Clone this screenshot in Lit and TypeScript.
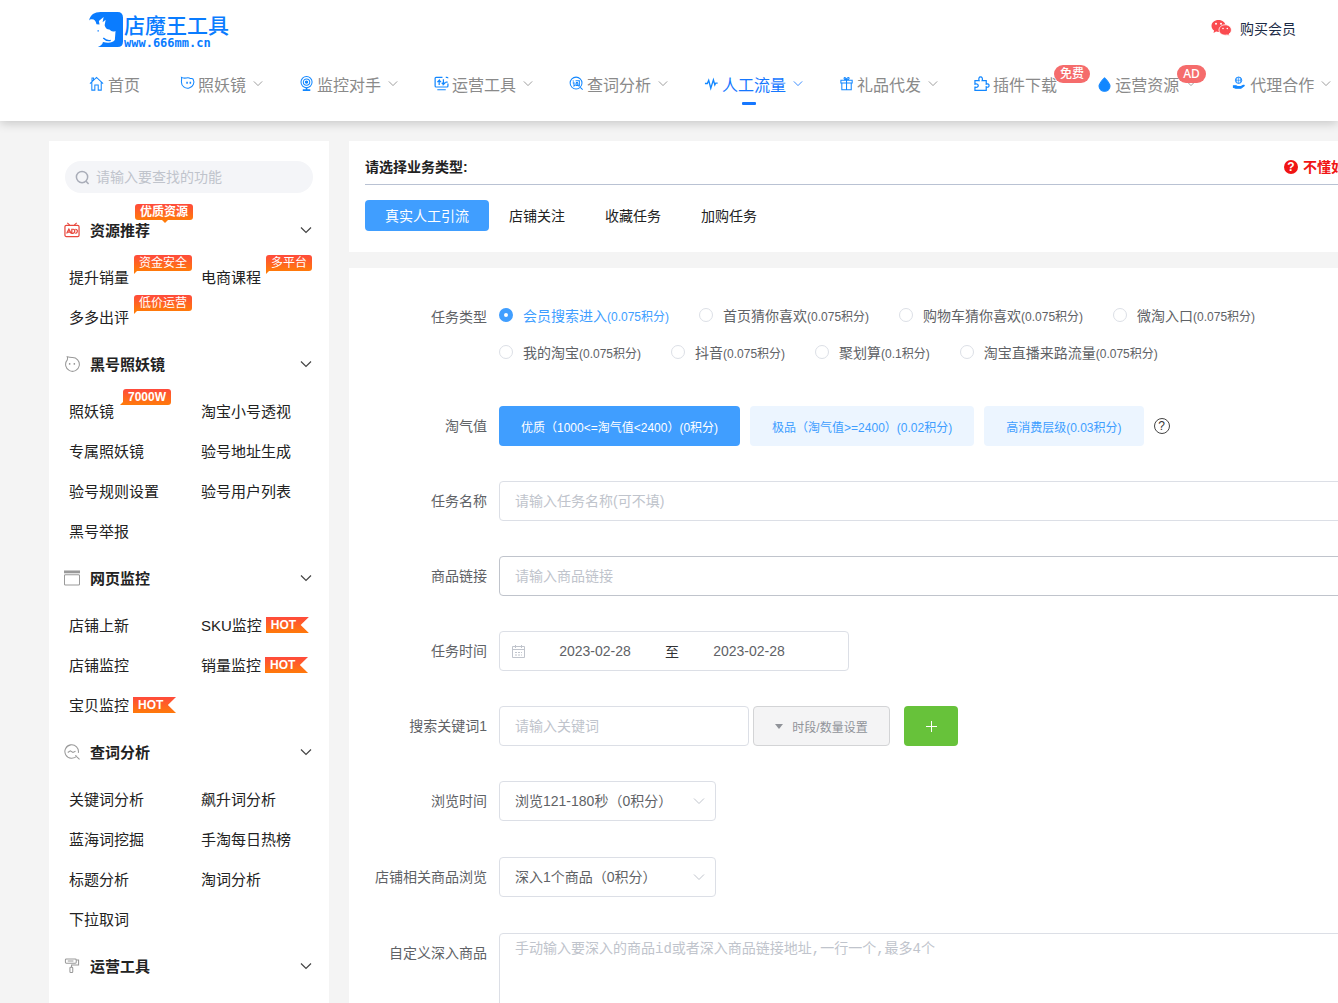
import { LitElement, html, css, svg, nothing } from "lit";
import { customElement, state } from "lit/decorators.js";
import { classMap } from "lit/directives/class-map.js";

const icons: Record<string, unknown> = {
  home: svg`<path d="M1 8 8 1.500 15 8M3 6.500V15h3.200V9.500h3.600V15H13V6.500M3.200 5.600V2.200h1.600V4"/>`,
  mirror: svg`<path d="M1.600 1.500c.4 2-.1 2.800-.1 4.900a6.600 6.600 0 1 0 12.400-3.100C12.800 1.900 11.800 3.300 10 2.200 7.400 1.100 5 3.500 1.600 1.500Z"/><path d="M7.500 6.200v2M11 6.200v2" stroke-width="1.600"/>`,
  cam: svg`<circle cx="8" cy="6.500" r="5.900"/><circle cx="8" cy="6.500" r="3.400"/><circle cx="8" cy="6.500" r="1.200" fill="currentColor"/><path d="M8 12.500v1.500M4 15h8" stroke-width="1.700"/>`,
  screen: svg`<path d="M9 1.500H2.200Q1.200 1.500 1.200 2.500v8.200q0 1 1 1h11.600q1 0 1-1V8M12.500 1.500h1.300q1 0 1 1M3.500 14.600h9M5.500 9.500V4.500L3.600 6.500M5.500 4.500l2 2M10 3.500v5.500l2.300-2.300M10 9 8.200 7.200M12.500 6.500h2" stroke-width="1.300"/>`,
  word: svg`<circle cx="7.500" cy="7.500" r="6.300"/><path d="M12 12l2.500 2.500M4 5l1 .8M4 7.300h1.300v3.200l1-.7M7 5h4v5.500H9.800M7.300 6.800h2.200M7.400 8.300h2v1.700h-2z"/>`,
  pulse: svg`<path d="M1 8H3.500l1.500-3.500 2.200 8.500L10 4 11.500 9.500 12.500 7.500H14.500" stroke-width="1.400"/>`,
  gift: svg`<path d="M2 4.500h12v3H2zM3 7.500V14.500h10V7.500M8 4.500v10M8 4.400C5.500 4.400 4.600 1.600 6.200 1.500 7.500 1.500 8 4.400 8 4.400s.5-2.900 2-2.900c1.500.1.700 2.900-2 2.900"/>`,
  puzzle: svg`<path d="M1 5h4.500C4.500 2.500 5.500 1 7 1s2.600 1.500 1.600 4H13v3.700c2-.8 3 .1 3 1.400 0 1.400-1 2.400-3 1.500V15.300H1v-3.400c2.500.6 3.500-.5 3.500-1.700S3.300 8 1 8.700Z" stroke-width="1.300"/>`,
  drop: svg`<path d="M8 2S2.200 7.600 2.200 11C2.200 14 4.700 16.300 8 16.300S13.800 14 13.800 11C13.800 7.600 8 2 8 2Z" fill="currentColor"/>`,
  agent: svg`<circle cx="7" cy="4.500" r="3.400" stroke-width="1"/><path d="M3.800 4.500h6.400M7 1v7M5.300 1.800q-1 2.700 0 5.400M8.700 1.800q1 2.700 0 5.400" stroke-width=".7"/><path d="M1.500 10.300h2.800l2 1H9l3-1.500q1-.2 1 .5L9.500 13H4L1.500 12.200Z" fill="currentColor"/>`,
  ad: svg`<rect x="1" y="3.500" width="15" height="12" rx="1.500" stroke-width="1.300"/><path d="M3.500 1 6 3.200M13.500 1 11 3.200"/><path d="M2.800 12.300 5.200 7.500l2.400 4.800M4 10.800h2.800M8.300 7.700h1.500q1.900.2 1.600 2.200-.2 2-1.900 2.200H8.300ZM12 7.700q2.300.1 2.200 2.200t-2.200 2.200" stroke-width="1.300"/>`,
  face: svg`<path d="M3.500.8q.5 1.500 0 3.400A7.300 7.300 0 1 0 8.500 1.700Q6 1.600 3.500.8Z"/><path d="M6 7.500v1.700M11 7.500v1.700" stroke-width="1.500"/>`,
  page: svg`<path d="M0 .5h17v3H0z" fill="currentColor" stroke="none"/><rect x=".5" y="5" width="16" height="11" rx="1"/>`,
  trend: svg`<path d="M13.800 12.500A7.200 7.200 0 1 1 15.200 9.500M12 12l4.500 4.300M4 9l2.700-1.800L9.500 9l2.700-1.200"/>`,
  roller: svg`<rect x="1.500" y="1" width="11.500" height="4.500" rx="1"/><path d="M4 3.200h6M13 2.200h2.500V7.500H8v2.300"/><rect x="6.300" y="9.800" width="3" height="5.700" rx=".8"/>`,
};

const icon = (name: string) =>
  html`<svg class="icon" viewBox="0 0 17 17" aria-hidden="true">${icons[name]}</svg>`;

const chevron = (cls: string) =>
  html`<svg class=${cls} viewBox="0 0 12 8" aria-hidden="true"><path d="M1 1.500 6 6.500 11 1.500" /></svg>`;

const font = css`
  :host {
    box-sizing: border-box;
    font-family: "Liberation Sans", "Noto Sans CJK SC", sans-serif;
  }
  * {
    box-sizing: border-box;
  }
  a {
    color: inherit;
    text-decoration: none;
  }
  button,
  input,
  select {
    font-family: inherit;
    margin: 0;
  }
  .icon {
    width: 16px;
    height: 16px;
    fill: none;
    stroke: currentColor;
    stroke-width: 1.1;
    flex: none;
  }
`;

interface NavItem {
  label: string;
  icon: string;
  arrow?: boolean;
  badge?: string;
  wide?: boolean;
}

const nav: NavItem[] = [
  { label: "首页", icon: "home", wide: true },
  { label: "照妖镜", icon: "mirror", arrow: true },
  { label: "监控对手", icon: "cam", arrow: true },
  { label: "运营工具", icon: "screen", arrow: true },
  { label: "查词分析", icon: "word", arrow: true },
  { label: "人工流量", icon: "pulse", arrow: true },
  { label: "礼品代发", icon: "gift", arrow: true },
  { label: "插件下载", icon: "puzzle", badge: "免费", wide: true },
  { label: "运营资源", icon: "drop", arrow: true, badge: "AD" },
  { label: "代理合作", icon: "agent", arrow: true },
];

@customElement("site-header")
class SiteHeader extends LitElement {
  @state() private current = "人工流量";

  static styles = [
    font,
    css`
      :host {
        display: block;
        position: relative;
        z-index: 2;
        background: #fff;
        box-shadow: 0 2px 10px rgba(0, 0, 0, 0.2);
      }
      .top {
        display: flex;
        justify-content: space-between;
        align-items: center;
        height: 50px;
        padding: 8px 42px 0 89px;
      }
      .logo {
        display: flex;
        gap: 1px;
        color: #0a7cff;
      }
      .mark {
        width: 34px;
        height: 35px;
      }
      .brand {
        display: flex;
        flex-direction: column;
        font-size: 21px;
        font-weight: 500;
        line-height: 27px;
      }
      .domain {
        font: bold 12px/8px "DejaVu Sans Mono", monospace;
      }
      .buy {
        display: flex;
        align-items: center;
        gap: 8px;
        padding-bottom: 2px;
        font-size: 14px;
        color: #1b2a45;
      }
      .wechat {
        width: 21px;
        height: 18px;
      }
      nav {
        display: flex;
        height: 71px;
        padding: 0 0 4px 69px;
      }
      .item {
        position: relative;
        display: flex;
        align-items: center;
        flex: none;
        gap: 2px;
        padding: 0 20px;
        font-size: 16px;
        color: #8a8a8a;
      }
      .wide {
        gap: 3px;
      }
      .item .icon {
        color: #1287ff;
      }
      .on {
        color: #1677ff;
      }
      .on::after {
        content: "";
        position: absolute;
        left: calc(50% - 10px);
        top: 52px;
        width: 14px;
        height: 3px;
        border-radius: 1px;
        background: #1677ff;
      }
      .arrow {
        width: 10px;
        height: 7px;
        margin: 0 -4px 0 5px;
        fill: none;
        stroke: currentColor;
      }
      .badge {
        position: absolute;
        left: 100px;
        top: 15px;
        height: 18px;
        padding: 0 6px;
        border-radius: 9px;
        background: #f56c6c;
        color: #fff;
        font: 500 12px/18px "Noto Sans", "Noto Sans CJK SC", sans-serif;
        white-space: nowrap;
      }
    `,
  ];

  render() {
    return html`
      <div class="top">
        <a class="logo" href="#">
          <svg class="mark" viewBox="0 0 100 100" preserveAspectRatio="none" aria-hidden="true">
            <path
              fill="currentColor"
              d="M0 24C4 8 16 0 34 0H84Q100 0 100 16V84Q100 100 84 100H26Q40 95 41 86 66 92 76 80L78 54Q68 59 60 50 49 50 46 38L49 22 40 29 43 14 29 26 31 36 22 35Q19 21 9 21 3 20 0 24Z"
            />
            <path fill="none" stroke="currentColor" stroke-width="4" d="M42 74Q52 84 64 81M27 52v4" />
          </svg>
          <span class="brand">店魔王工具<span class="domain">www.666mm.cn</span></span>
        </a>
        <a class="buy" href="#">
          <svg class="wechat" viewBox="0 0 21 18" aria-hidden="true">
            <path fill="#fa4b50" d="M7.500 1C3.600 1 .5 3.500.5 6.900c0 1.900 1 3.500 2.600 4.600L2.500 14l2.600-1.400c.8.2 1.500.3 2.400.3 4 0 7-2.600 7-6S11.500 1 7.500 1Z" />
            <path fill="#fa4b50" stroke="#fff" stroke-width=".8" d="M14.200 5.800c-3.500 0-6.200 2.300-6.200 5.200s2.700 5.200 6.200 5.200c.7 0 1.400-.1 2-.3l2.200 1.200-.5-2c1.500-1 2.500-2.400 2.500-4.100 0-2.900-2.700-5.200-6.200-5.200Z" />
            <g fill="#fff"><circle cx="5" cy="4.800" r="1" /><circle cx="10" cy="4.800" r="1" /><circle cx="12" cy="9.500" r=".8" /><circle cx="16.300" cy="9.500" r=".8" /></g>
          </svg>
          购买会员
        </a>
      </div>
      <nav>
        ${nav.map(
          (n) => html`<a
            href="#"
            class=${classMap({ item: true, wide: !!n.wide, on: n.label === this.current })}
            @click=${() => (this.current = n.label)}
            >${icon(n.icon)}<span>${n.label}</span>${n.arrow ? chevron("arrow") : nothing}${n.badge
              ? html`<span class="badge">${n.badge}</span>`
              : nothing}</a
          >`
        )}
      </nav>
    `;
  }
}

interface MenuEntry {
  label: string;
  tag?: string;
  hot?: boolean;
}
interface MenuGroup {
  title: string;
  icon: string;
  red?: boolean;
  tag?: string;
  items: MenuEntry[];
}

const groups: MenuGroup[] = [
  {
    title: "资源推荐",
    icon: "ad",
    red: true,
    tag: "优质资源",
    items: [
      { label: "提升销量", tag: "资金安全" },
      { label: "电商课程", tag: "多平台" },
      { label: "多多出评", tag: "低价运营" },
    ],
  },
  {
    title: "黑号照妖镜",
    icon: "face",
    items: [
      { label: "照妖镜", tag: "7000W" },
      { label: "淘宝小号透视" },
      { label: "专属照妖镜" },
      { label: "验号地址生成" },
      { label: "验号规则设置" },
      { label: "验号用户列表" },
      { label: "黑号举报" },
    ],
  },
  {
    title: "网页监控",
    icon: "page",
    items: [
      { label: "店铺上新" },
      { label: "SKU监控", hot: true },
      { label: "店铺监控" },
      { label: "销量监控", hot: true },
      { label: "宝贝监控", hot: true },
    ],
  },
  {
    title: "查词分析",
    icon: "trend",
    items: [
      { label: "关键词分析" },
      { label: "飙升词分析" },
      { label: "蓝海词挖掘" },
      { label: "手淘每日热榜" },
      { label: "标题分析" },
      { label: "淘词分析" },
      { label: "下拉取词" },
    ],
  },
  { title: "运营工具", icon: "roller", items: [] },
];

@customElement("side-menu")
class SideMenu extends LitElement {
  @state() private closed = new Set<string>();

  static styles = [
    font,
    css`
      :host {
        display: block;
        flex: none;
        width: 280px;
        padding: 20px 16px 10px;
        background: #fff;
        font-size: 15px;
        color: #222;
      }
      .search {
        display: flex;
        align-items: center;
        gap: 4px;
        height: 32px;
        margin-bottom: 10px;
        padding: 0 10px;
        border-radius: 16px;
        background: #f4f5f8;
        color: #a9adb8;
      }
      .lens {
        width: 15px;
        height: 15px;
        fill: none;
        stroke: currentColor;
        stroke-width: 1.6;
      }
      .query {
        flex: 1;
        min-width: 0;
        border: 0;
        outline: 0;
        background: none;
        font-size: 14px;
      }
      .query::placeholder {
        color: #c0c4cc;
      }
      .head {
        display: flex;
        align-items: center;
        width: 100%;
        height: 54px;
        padding: 0;
        border: 0;
        background: none;
        font-size: 15px;
        font-weight: bold;
        color: #222;
        text-align: left;
      }
      .sign {
        display: flex;
        margin: 0 10px 0 -1px;
        color: #999;
      }
      .red {
        color: #e8473c;
      }
      .title {
        position: relative;
        flex: none;
        padding-bottom: 2px;
      }
      .arrow {
        width: 12px;
        height: 8px;
        margin-left: auto;
        margin-right: 1px;
        fill: none;
        stroke: #444;
        stroke-width: 1.2;
      }
      .list {
        display: grid;
        grid-template-columns: 132px 1fr;
        padding-left: 4px;
      }
      .entry {
        display: flex;
        align-items: center;
        gap: 4px;
        height: 40px;
        white-space: nowrap;
      }
      .name {
        position: relative;
        padding-bottom: 2px;
      }
      .tag {
        position: absolute;
        left: calc(100% + 5px);
        top: -11px;
        height: 16px;
        padding: 0 5px;
        border-radius: 3px 3px 3px 0;
        background: linear-gradient(#ff4a3c, #ff7a0a);
        color: #fff;
        font-size: 12px;
        line-height: 16px;
        white-space: nowrap;
      }
      .tag::after {
        content: "";
        position: absolute;
        left: 0;
        top: 15px;
        border-style: solid;
        border-width: 4px 4px 0 0;
        border-color: #ff7a0a transparent transparent;
      }
      .title .tag {
        left: 45px;
        top: -15px;
        border-radius: 3px;
      }
      .title .tag::after {
        left: 26px;
        border-width: 4px 4px 0;
      }
      .tag.strong {
        left: calc(100% + 9px);
        font-weight: bold;
      }
      .tag.strong::after {
        left: -3px;
        border-width: 0 0 4px 4px;
        border-color: transparent transparent #ff7a0a;
        top: 12px;
      }
      .hot {
        width: 43px;
        height: 16px;
        padding-left: 5px;
        background: linear-gradient(#ff4a3c, #ff7a0a);
        clip-path: polygon(0 0, 100% 0, 81% 50%, 100% 100%, 0 100%);
        color: #fff;
        font-size: 12px;
        font-weight: bold;
        line-height: 16px;
      }
    `,
  ];

  private toggle(t: string) {
    const next = new Set(this.closed);
    if (!next.delete(t)) next.add(t);
    this.closed = next;
  }

  render() {
    return html`
      <label class="search">
        <svg class="lens" viewBox="0 0 16 16" aria-hidden="true"><circle cx="7.500" cy="7.500" r="6" /><path d="M11.800 12l2.700 3" /></svg>
        <input class="query" type="text" placeholder="请输入要查找的功能" />
      </label>
      ${groups.map(
        (g) => html`
          <button class="head" type="button" @click=${() => this.toggle(g.title)}>
            <span class=${classMap({ sign: true, red: !!g.red })}>${icon(g.icon)}</span>
            <span class="title">${g.title}${g.tag ? html`<span class="tag">${g.tag}</span>` : nothing}</span>
            ${chevron("arrow")}
          </button>
          ${this.closed.has(g.title)
            ? nothing
            : html`<div class="list">
                ${g.items.map(
                  (i) => html`<a class="entry" href="#"
                    ><span class="name"
                      >${i.label}${i.tag
                        ? html`<span class=${classMap({ tag: true, strong: i.tag === "7000W" })}>${i.tag}</span>`
                        : nothing}</span
                    >${i.hot ? html`<span class="hot">HOT</span>` : nothing}</a
                  >`
                )}
              </div>`}
        `
      )}
    `;
  }
}

const kinds: [string, string][] = [
  ["会员搜索进入", "(0.075积分)"],
  ["首页猜你喜欢", "(0.075积分)"],
  ["购物车猜你喜欢", "(0.075积分)"],
  ["微淘入口", "(0.075积分)"],
  ["我的淘宝", "(0.075积分)"],
  ["抖音", "(0.075积分)"],
  ["聚划算", "(0.1积分)"],
  ["淘宝直播来路流量", "(0.075积分)"],
];
const levels = ["优质（1000<=淘气值<2400）(0积分)", "极品（淘气值>=2400）(0.02积分)", "高消费层级(0.03积分)"];
const tabs = ["真实人工引流", "店铺关注", "收藏任务", "加购任务"];

@customElement("task-form")
class TaskForm extends LitElement {
  @state() private tab = 0;
  @state() private kind = 0;
  @state() private level = 0;

  static styles = [
    font,
    css`
      :host {
        display: flex;
        flex-direction: column;
        flex: 1 0 1012px;
        gap: 16px;
        font-size: 14px;
        color: #606266;
      }
      .panel {
        padding: 16px 16px 21px;
        background: #fff;
      }
      .bar {
        display: flex;
        justify-content: space-between;
        padding-bottom: 7px;
        border-bottom: 1px solid #b9c2d3;
        line-height: 20px;
        font-weight: bold;
        color: #222;
      }
      h2 {
        margin: 0;
        font-size: 14px;
      }
      .help {
        display: flex;
        align-items: center;
        gap: 5px;
        color: #f01414;
      }
      .dot {
        display: grid;
        place-items: center;
        width: 14px;
        height: 14px;
        border-radius: 50%;
        background: #f01414;
        color: #fff;
        font-size: 12px;
        line-height: 14px;
      }
      .tabs {
        display: flex;
        margin-top: 15px;
      }
      .tab {
        height: 31px;
        padding: 0 20px 2px;
        border: 0;
        border-radius: 4px;
        background: none;
        font-size: 14px;
        color: #222;
      }
      .tab.on {
        background: #409eff;
        color: #fff;
      }
      .form {
        flex: 1;
        display: flex;
        flex-direction: column;
        gap: 35px;
        padding: 29px 16px 30px;
        background: #fff;
      }
      .row {
        display: flex;
        min-height: 40px;
      }
      .tall {
        min-height: 41px;
      }
      .label {
        flex: none;
        width: 134px;
        padding-right: 12px;
        line-height: 40px;
        text-align: right;
      }
      .field {
        flex: 1;
        display: flex;
        align-items: flex-start;
      }
      .radios {
        flex-wrap: wrap;
        column-gap: 30px;
      }
      .radio {
        display: flex;
        align-items: center;
        gap: 10px;
        height: 37px;
        padding-bottom: 2px;
      }
      .radio input {
        appearance: none;
        width: 14px;
        height: 14px;
        border: 1px solid #dcdfe6;
        border-radius: 50%;
        background: #fff;
      }
      .radio input:checked {
        border: 5px solid #409eff;
      }
      .radio.on {
        color: #409eff;
      }
      small {
        font-size: 12px;
      }
      .levels {
        align-items: center;
        gap: 10px;
      }
      .level {
        height: 40px;
        padding: 0 22px;
        border: 0;
        border-radius: 4px;
        background: #ecf5ff;
        font-size: 12px;
        color: #409eff;
      }
      .level.on {
        background: #409eff;
        color: #fff;
      }
      .ask {
        width: 16px;
        height: 16px;
        padding: 0;
        border: 1px solid #444;
        border-radius: 50%;
        background: none;
        font-size: 12px;
        line-height: 14px;
        color: #333;
      }
      .box {
        width: 100%;
        height: 40px;
        padding: 0 15px;
        border: 1px solid #dcdfe6;
        border-radius: 4px;
        outline: 0;
        background: #fff;
        font-size: 14px;
        color: #606266;
      }
      .box.dark {
        border-color: #c0c4cc;
      }
      ::placeholder {
        color: #c0c4cc;
      }
      .range {
        display: flex;
        align-items: center;
        width: 350px;
        padding: 0 12px;
        color: #303133;
      }
      .cal {
        width: 13px;
        height: 13px;
        fill: none;
        stroke: #c0c4cc;
      }
      .date {
        width: 140px;
        border: 0;
        outline: 0;
        background: none;
        font-size: 14px;
        color: #606266;
        text-align: center;
      }
      .key {
        width: 250px;
      }
      .setup {
        display: flex;
        align-items: center;
        justify-content: center;
        gap: 9px;
        width: 137px;
        height: 40px;
        margin: 0 14px 0 4px;
        border: 1px solid #d3d4d6;
        border-radius: 4px;
        background: #f4f4f5;
        font-size: 12px;
        color: #909399;
      }
      .caret {
        border: solid transparent;
        border-width: 5px 4px 0;
        border-top-color: #909399;
      }
      .add {
        display: grid;
        place-items: center;
        width: 54px;
        height: 40px;
        border: 0;
        border-radius: 4px;
        background: #67c23a;
      }
      .plus {
        width: 11px;
        height: 11px;
        stroke: #fff;
      }
      .pick {
        display: grid;
        align-items: center;
        width: 217px;
      }
      .pick > * {
        grid-area: 1 / 1;
      }
      select.box {
        appearance: none;
      }
      .arrow {
        width: 12px;
        height: 8px;
        margin-right: 11px;
        justify-self: end;
        fill: none;
        stroke: #c0c4cc;
        pointer-events: none;
      }
      textarea.box {
        height: 96px;
        padding: 5px 15px;
        font: 14px/21px "Liberation Mono", "Noto Sans CJK SC", monospace;
      }
    `,
  ];

  render() {
    return html`
      <section class="panel">
        <div class="bar">
          <h2>请选择业务类型:</h2>
          <a class="help" href="#"><span class="dot">?</span>不懂如</a>
        </div>
        <div class="tabs">
          ${tabs.map(
            (t, i) => html`<button
              type="button"
              class=${classMap({ tab: true, on: i === this.tab })}
              @click=${() => (this.tab = i)}
            >${t}</button>`
          )}
        </div>
      </section>
      <form class="form">
        <div class="row">
          <span class="label" id="kind">任务类型</span>
          <div class="field radios" role="radiogroup" aria-labelledby="kind">
            ${kinds.map(
              ([name, price], i) => html`<label class=${classMap({ radio: true, on: i === this.kind })}
                ><input
                  type="radio"
                  name="kind"
                  .checked=${i === this.kind}
                  @change=${() => (this.kind = i)}
                /><span>${name}<small>${price}</small></span></label
              >`
            )}
          </div>
        </div>
        <div class="row">
          <span class="label" id="level">淘气值</span>
          <div class="field levels" role="group" aria-labelledby="level">
            ${levels.map(
              (l, i) => html`<button
                type="button"
                class=${classMap({ level: true, on: i === this.level })}
                @click=${() => (this.level = i)}
              >${l}</button>`
            )}
            <button class="ask" type="button">?</button>
          </div>
        </div>
        <div class="row">
          <label class="label" for="name">任务名称</label>
          <div class="field"><input class="box" id="name" type="text" placeholder="请输入任务名称(可不填)" /></div>
        </div>
        <div class="row">
          <label class="label" for="link">商品链接</label>
          <div class="field"><input class="box dark" id="link" type="text" placeholder="请输入商品链接" /></div>
        </div>
        <div class="row">
          <label class="label" for="from">任务时间</label>
          <div class="field">
            <div class="box range">
              <svg class="cal" viewBox="0 0 13 13" aria-hidden="true">
                <path d="M.5 1.500h12v11H.5zM.5 4.500h12M3.500 0v3M9.500 0v3" />
                <path d="M3 7.500h7M3 10h7" stroke-dasharray="2 1" />
              </svg>
              <input class="date" id="from" type="text" value="2023-02-28" />
              <label for="to">至</label>
              <input class="date" id="to" type="text" value="2023-02-28" />
            </div>
          </div>
        </div>
        <div class="row">
          <label class="label" for="key">搜索关键词1</label>
          <div class="field">
            <input class="box key" id="key" type="text" placeholder="请输入关键词" />
            <button class="setup" type="button"><span class="caret"></span>时段/数量设置</button>
            <button class="add" type="button">
              <svg class="plus" viewBox="0 0 11 11" aria-hidden="true"><path d="M5.500 0v11M0 5.500h11" /></svg>
            </button>
          </div>
        </div>
        <div class="row tall">
          <label class="label" for="stay">浏览时间</label>
          <div class="field">
            <div class="pick">
              <select class="box" id="stay"><option>浏览121-180秒（0积分）</option></select>
              ${chevron("arrow")}
            </div>
          </div>
        </div>
        <div class="row tall">
          <label class="label" for="depth">店铺相关商品浏览</label>
          <div class="field">
            <div class="pick">
              <select class="box" id="depth"><option>深入1个商品（0积分）</option></select>
              ${chevron("arrow")}
            </div>
          </div>
        </div>
        <div class="row">
          <label class="label" for="custom">自定义深入商品</label>
          <div class="field">
            <textarea class="box" id="custom" placeholder="手动输入要深入的商品id或者深入商品链接地址,一行一个,最多4个"></textarea>
          </div>
        </div>
      </form>
    `;
  }
}

@customElement("app-root")
class AppRoot extends LitElement {
  static styles = css`
    :host {
      display: block;
      height: 100vh;
      overflow: auto;
      scrollbar-width: none;
      background: #f4f4f4;
    }
    .body {
      display: flex;
      gap: 20px;
      padding: 20px 0 0 49px;
    }
  `;

  render() {
    return html`
      <site-header></site-header>
      <main class="body">
        <side-menu></side-menu>
        <task-form></task-form>
      </main>
    `;
  }
}
